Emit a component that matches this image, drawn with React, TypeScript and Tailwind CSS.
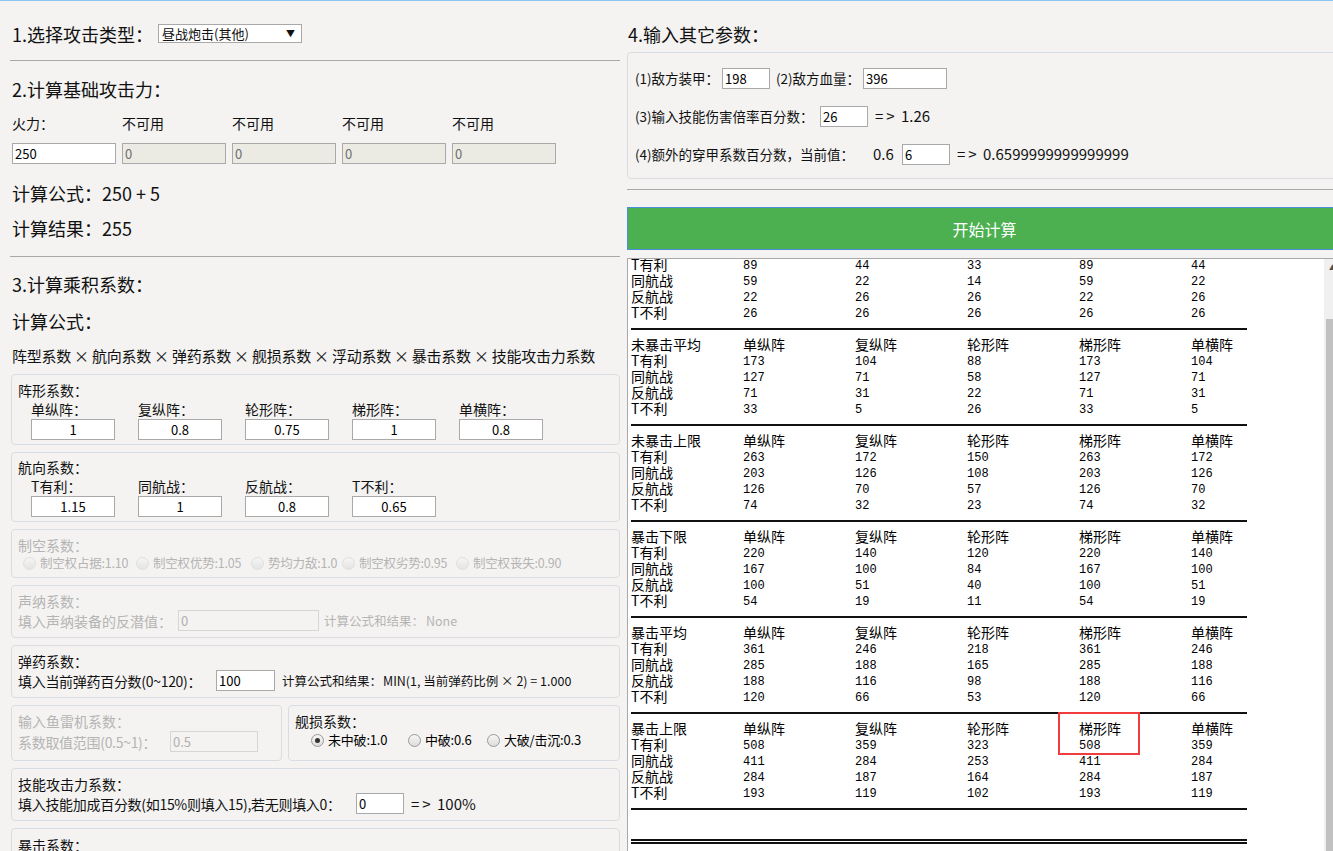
import React from "react";

const cols = ["单纵阵", "复纵阵", "轮形阵", "梯形阵", "单横阵"];
const rowNames = ["T有利", "同航战", "反航战", "T不利"];

const topRows = [
  [89, 44, 33, 89, 44],
  [59, 22, 14, 59, 22],
  [22, 26, 26, 22, 26],
  [26, 26, 26, 26, 26],
];

const sections = [
  { title: "未暴击平均", rows: [[173, 104, 88, 173, 104], [127, 71, 58, 127, 71], [71, 31, 22, 71, 31], [33, 5, 26, 33, 5]] },
  { title: "未暴击上限", rows: [[263, 172, 150, 263, 172], [203, 126, 108, 203, 126], [126, 70, 57, 126, 70], [74, 32, 23, 74, 32]] },
  { title: "暴击下限", rows: [[220, 140, 120, 220, 140], [167, 100, 84, 167, 100], [100, 51, 40, 100, 51], [54, 19, 11, 54, 19]] },
  { title: "暴击平均", rows: [[361, 246, 218, 361, 246], [285, 188, 165, 285, 188], [188, 116, 98, 188, 116], [120, 66, 53, 120, 66]] },
  { title: "暴击上限", rows: [[508, 359, 323, 508, 359], [411, 284, 253, 411, 284], [284, 187, 164, 284, 187], [193, 119, 102, 193, 119]] },
];

function Input({ value, className = "", disabled = false }: { value: string; className?: string; disabled?: boolean }) {
  return (
    <input
      readOnly
      value={value}
      disabled={disabled}
      className={
        "h-[21px] shrink-0 border px-[2px] text-[13px] leading-[19px] outline-none " +
        (disabled ? "border-[#d6d6d6] bg-[#f4f3f1] text-[#b0b0b0] " : "border-[#a9a9a9] bg-white text-black ") +
        className
      }
    />
  );
}

function Radio({ label, checked = false, disabled = false, w }: { label: string; checked?: boolean; disabled?: boolean; w: string }) {
  return (
    <div className={"flex shrink-0 items-center gap-[4px] whitespace-nowrap " + w + (disabled ? " text-[#b4b4b4]" : " text-black")}>
      <span
        className={
          "flex h-[13px] w-[13px] shrink-0 items-center justify-center rounded-full border bg-gradient-to-b from-[#f6f6f6] to-[#dcdcdc] " +
          (disabled ? "border-[#d2d2d2] opacity-60" : "border-[#9a9a9a]")
        }
      >
        {checked && <span className="h-[5px] w-[5px] rounded-full bg-[#333]" />}
      </span>
      <span>{label}</span>
    </div>
  );
}

function Box({ className = "", children }: { className?: string; children: React.ReactNode }) {
  return <div className={"rounded-[4px] border border-[#d8dde3] pl-[6px] " + className}>{children}</div>;
}

function NumRow({ label, vals }: { label: string; vals: number[] }) {
  return (
    <div className="grid h-4 grid-cols-[112px_112px_112px_112px_112px_112px] pl-[3px] leading-4">
      <span className="text-[14px] leading-[15px]">{label}</span>
      {vals.map((v, i) => (
        <span key={i} className="pt-[3px] font-['Liberation_Mono',monospace] text-[12px] leading-[13px]">
          {v}
        </span>
      ))}
    </div>
  );
}

function Rule() {
  return (
    <div className="flex h-4 items-center pl-[3px]">
      <div className="h-[2px] w-[616px] bg-[#111]" />
    </div>
  );
}

export default function App() {
  return (
    <div className="h-[851px] w-[1333px] overflow-hidden border-t border-[#8cc4f4] bg-[#f4f3f1] font-['Noto_Sans_CJK_SC',sans-serif] text-[#111]">
      <div className="flex">
        {/* left column */}
        <div className="w-[620px] shrink-0 pl-[12px]">
          <div className="mt-[23px] flex h-[19px] items-center">
            <span className="w-[146px] text-[18px] leading-5">1.选择攻击类型：</span>
            <div className="flex h-[19px] w-[144px] items-center justify-between border border-[#a9a9a9] bg-white pl-[3px] pr-[6px] text-[13px]">
              <span>昼战炮击(其他)</span>
              <span className="text-[9px]">▼</span>
            </div>
          </div>
          <div className="-ml-[2px] mt-[17px] h-px w-[610px] bg-[#a8a8a8]" />

          <div className="mt-[18px] text-[18px] leading-5">2.计算基础攻击力：</div>
          <div className="mt-[16px] flex gap-[6px] text-[14px] leading-4">
            {["火力：", "不可用", "不可用", "不可用", "不可用"].map((t, i) => (
              <span key={i} className="w-[104px]">
                {t}
              </span>
            ))}
          </div>
          <div className="mt-[12px] flex gap-[6px]">
            <Input value="250" className="w-[104px]" />
            {[0, 1, 2, 3].map((i) => (
              <input
                key={i}
                readOnly
                value="0"
                className="h-[21px] w-[104px] border border-[#a9a9a9] bg-[#ebebe4] px-[2px] text-[13px] text-[#6d6d6d] outline-none"
              />
            ))}
          </div>
          <div className="mt-[19px] text-[18px] leading-5">计算公式：250 + 5</div>
          <div className="mt-[15px] text-[18px] leading-5">计算结果：255</div>
          <div className="-ml-[2px] mt-[18px] h-px w-[610px] bg-[#a8a8a8]" />

          <div className="mt-[17px] text-[18px] leading-5">3.计算乘积系数：</div>
          <div className="mt-[17px] text-[18px] leading-5">计算公式：</div>
          <div className="mt-[16px] whitespace-nowrap text-[15px] leading-[18px] tracking-[-0.25px]">
            阵型系数 × 航向系数 × 弹药系数 × 舰损系数 × 浮动系数 × 暴击系数 × 技能攻击力系数
          </div>

          <div className="-ml-px mt-[9px] flex w-[609px] flex-col gap-[7px] text-[14px] leading-4">
            <Box className="h-[71px] pt-[7px]">
              <div>阵形系数：</div>
              <div className="mt-[3px] flex gap-[23px] pl-[13px]">
                {[["单纵阵：", "1"], ["复纵阵：", "0.8"], ["轮形阵：", "0.75"], ["梯形阵：", "1"], ["单横阵：", "0.8"]].map(([l, v]) => (
                  <div key={l} className="flex w-[84px] flex-col">
                    <span>{l}</span>
                    <Input value={v} className="mt-[2px] w-[84px] text-center" />
                  </div>
                ))}
              </div>
            </Box>
            <Box className="h-[70px] pt-[6px]">
              <div>航向系数：</div>
              <div className="mt-[3px] flex gap-[23px] pl-[13px]">
                {[["T有利：", "1.15"], ["同航战：", "1"], ["反航战：", "0.8"], ["T不利：", "0.65"]].map(([l, v]) => (
                  <div key={l} className="flex w-[84px] flex-col">
                    <span>{l}</span>
                    <Input value={v} className="mt-[2px] w-[84px] text-center" />
                  </div>
                ))}
              </div>
            </Box>
            <Box className="h-[49px] pt-[7px] text-[#b4b4b4]">
              <div>制空系数：</div>
              <div className="mt-[2px] flex pl-[5px] text-[12.5px] tracking-[-0.2px]">
                <Radio w="w-[113px]" label="制空权占据:1.10" disabled />
                <Radio w="w-[115px]" label="制空权优势:1.05" disabled />
                <Radio w="w-[91px]" label="势均力敌:1.0" disabled />
                <Radio w="w-[114px]" label="制空权劣势:0.95" disabled />
                <Radio w="w-[110px]" label="制空权丧失:0.90" disabled />
              </div>
            </Box>
            <Box className="h-[53px] pt-[7px] text-[#b4b4b4]">
              <div>声纳系数：</div>
              <div className="mt-px flex items-center whitespace-nowrap">
                <span className="w-[160px]">填入声纳装备的反潜值：</span>
                <Input value="0" disabled className="w-[141px]" />
                <span className="ml-[5px] w-[102px] text-[12.5px]">计算公式和结果：</span>
                <span className="text-[12.5px]">None</span>
              </div>
            </Box>
            <Box className="h-[53px] pt-[7px]">
              <div>弹药系数：</div>
              <div className="mt-px flex items-center whitespace-nowrap">
                <span className="w-[198px] tracking-[-0.3px]">填入当前弹药百分数(0~120)：</span>
                <Input value="100" className="w-[59px]" />
                <span className="ml-[7px] w-[101px] text-[12.5px]">计算公式和结果：</span>
                <span className="text-[12.5px]">MIN(1, 当前弹药比例 × 2) = 1.000</span>
              </div>
            </Box>
            <div className="flex gap-[6px]">
              <Box className="h-[56px] w-[271px] pt-[7px] text-[#b4b4b4]">
                <div>输入鱼雷机系数：</div>
                <div className="mt-[2px] flex items-center whitespace-nowrap">
                  <span className="w-[152px] tracking-[-0.3px]">系数取值范围(0.5~1)：</span>
                  <Input value="0.5" disabled className="w-[88px]" />
                </div>
              </Box>
              <Box className="h-[56px] flex-1 pt-[7px]">
                <div>舰损系数：</div>
                <div className="mt-[3px] flex pl-[16px] text-[13px] tracking-[-0.2px]">
                  <Radio w="w-[97px]" label="未中破:1.0" checked />
                  <Radio w="w-[79px]" label="中破:0.6" />
                  <Radio w="w-[110px]" label="大破/击沉:0.3" />
                </div>
              </Box>
            </div>
            <Box className="h-[53px] pt-[7px]">
              <div>技能攻击力系数：</div>
              <div className="mt-px flex items-center whitespace-nowrap">
                <span className="w-[338px] tracking-[-0.3px]">填入技能加成百分数(如15%则填入15),若无则填入0：</span>
                <Input value="0" className="w-[48px]" />
                <span className="ml-[7px] text-[15px]">
                  <span className="tracking-[3px]">=&gt;</span> 100%
                </span>
              </div>
            </Box>
            <Box className="h-[60px] pt-[8px]">
              <div>暴击系数：</div>
            </Box>
          </div>
        </div>

        {/* right column */}
        <div className="ml-[7px] w-[715px] shrink-0">
          <div className="mt-[23px] pl-px text-[18px] leading-5">4.输入其它参数：</div>
          <div className="mt-[8px] h-[127px] whitespace-nowrap rounded-[4px] border border-[#d8dde3] pl-[7px] pt-[15px] text-[13.5px]">
            <div className="flex h-[21px] items-center">
              <span className="w-[87px]">(1)敌方装甲：</span>
              <Input value="198" className="w-[48px]" />
              <span className="ml-[6px] w-[87px]">(2)敌方血量：</span>
              <Input value="396" className="w-[84px]" />
            </div>
            <div className="mt-[17px] flex h-[21px] items-center">
              <span className="w-[185px]">(3)输入技能伤害倍率百分数：</span>
              <Input value="26" className="w-[48px]" />
              <span className="ml-[7px] text-[15px]">
                <span className="tracking-[3px]">=&gt;</span> 1.26
              </span>
            </div>
            <div className="mt-[17px] flex h-[21px] items-center">
              <span className="w-[238px]">(4)额外的穿甲系数百分数，当前值：</span>
              <span className="w-[29px] text-[15px]">0.6</span>
              <Input value="6" className="w-[48px]" />
              <span className="ml-[7px] text-[15px]">
                <span className="tracking-[3px]">=&gt;</span> 0.6599999999999999
              </span>
            </div>
          </div>
          <div className="mt-[10px] h-px w-full bg-[#a8a8a8]" />
          <button className="mt-[17px] flex h-[43px] w-full items-center justify-center border border-[#4a8fd8] bg-[#4caf50] text-[16px] text-white">
            开始计算
          </button>
          <div className="relative mt-[8px] flex h-[600px] border border-[#a9a9a9] bg-white text-black">
            <div className="flex-1 overflow-hidden">
              <div className="-mt-[2px]">
                {topRows.map((r, i) => (
                  <NumRow key={i} label={rowNames[i]} vals={r} />
                ))}
                <Rule />
                {sections.map((s) => (
                  <div key={s.title}>
                    <div className="grid h-4 grid-cols-[112px_112px_112px_112px_112px_112px] pl-[3px] text-[14px] leading-[15px]">
                      <span>{s.title}</span>
                      {cols.map((c) => (
                        <span key={c}>{c}</span>
                      ))}
                    </div>
                    {s.rows.map((r, i) => (
                      <NumRow key={i} label={rowNames[i]} vals={r} />
                    ))}
                    <Rule />
                  </div>
                ))}
                <div className="h-4" />
                <div className="flex h-4 flex-col justify-center gap-[1px] pl-[3px]">
                  <div className="h-[2px] w-[616px] bg-[#111]" />
                  <div className="h-[2px] w-[616px] bg-[#111]" />
                </div>
                <div className="h-4 pl-[3px] text-[14px] leading-4">击沉概率</div>
              </div>
            </div>
            <div className="flex w-[17px] flex-col bg-[#f0f0f0]">
              <div className="flex h-[17px] items-center justify-center text-[7px] text-[#505050]">▲</div>
              <div className="mx-[2px] mt-[43px] flex-1 bg-[#c1c1c1]" />
            </div>
            <div className="absolute left-[430px] top-[453px] h-[43px] w-[82px] border-2 border-[#f03c3c]" />
          </div>
        </div>
      </div>
    </div>
  );
}
